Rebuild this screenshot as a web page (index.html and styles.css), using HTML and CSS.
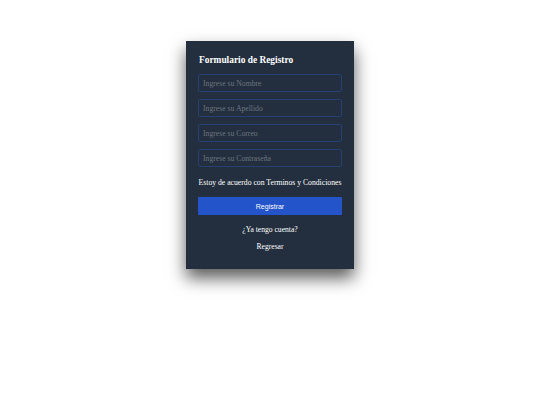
FILE: index.html
```html
<!DOCTYPE html>
<html lang="es">
<head>
<meta charset="utf-8">
<title>Formulario de Registro</title>
<link rel="stylesheet" href="styles.css">
</head>
<body>
<main class="page">
  <form class="card">
    <h2 class="title">Formulario de Registro</h2>
    <input class="field" type="text" placeholder="Ingrese su Nombre">
    <input class="field" type="text" placeholder="Ingrese su Apellido">
    <input class="field" type="email" placeholder="Ingrese su Correo">
    <input class="field" type="password" placeholder="Ingrese su Contraseña">
    <p class="terms">Estoy de acuerdo con Terminos y Condiciones</p>
    <button class="btn" type="button">Registrar</button>
    <p class="link first">¿Ya tengo cuenta?</p>
    <p class="link">Regresar</p>
  </form>
</main>
</body>
</html>
```

FILE: styles.css
```css
html, body {
  margin: 0;
  padding: 0;
  height: 100%;
  background: #ffffff;
}
body {
  font-family: "Liberation Serif", "Times New Roman", serif;
}
.page {
  min-height: 100%;
  display: flex;
  justify-content: center;
  align-items: flex-start;
  padding-top: 41px;
  box-sizing: border-box;
}
.card {
  box-sizing: border-box;
  width: 168px;
  padding: 13px 12px 17px;
  background: #232f3e;
  box-shadow: 0 9px 16px rgba(0, 0, 0, 0.65);
  display: flex;
  flex-direction: column;
}
.title {
  margin: 0 0 7px 1px;
  font-size: 9.4px;
  line-height: 13px;
  font-weight: bold;
  color: #ffffff;
}
.field {
  box-sizing: border-box;
  height: 18px;
  margin: 0 0 7px;
  padding: 0 4px;
  border: 1px solid #26416f;
  border-radius: 2px;
  background: #232f3e;
  color: #ffffff;
  font-family: "Liberation Serif", serif;
  font-size: 7.7px;
  outline: none;
}
.field::placeholder {
  color: #6c7480;
}
.terms {
  margin: 4px 0 9px;
  font-size: 7.7px;
  line-height: 10px;
  color: #ffffff;
  text-align: center;
  white-space: nowrap;
}
.btn {
  height: 18px;
  border: none;
  border-radius: 1px;
  background: #2354c9;
  color: #ffffff;
  font-family: "Liberation Sans", Arial, sans-serif;
  font-size: 7px;
  padding: 0;
}
.link {
  margin: 7px 0 0;
  font-size: 7.6px;
  line-height: 10px;
  color: #ffffff;
  text-align: center;
}
.link.first {
  margin-top: 10px;
}
```
